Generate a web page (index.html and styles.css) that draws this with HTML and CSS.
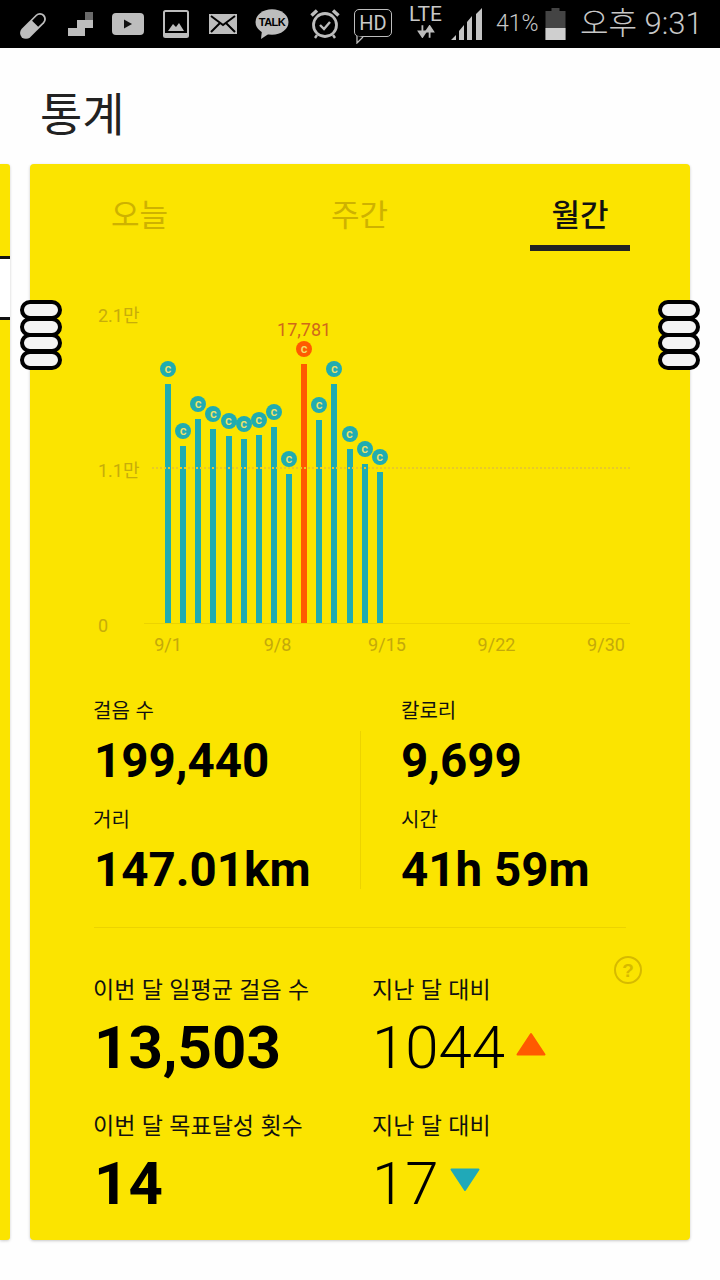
FILE: index.html
```html
<!DOCTYPE html>
<html lang="ko">
<head>
<meta charset="utf-8">
<title>통계</title>
<link rel="stylesheet" href="styles.css">
</head>
<body>
<header class="status">
  <svg class="ic ic-pill" viewBox="0 0 32 32"><path d="M4 21 19 6a6.500 6.500 0 0 1 9 .2 6.500 6.500 0 0 1 0 9L13 30a6.500 6.500 0 0 1-9 0 6.500 6.500 0 0 1 0-9Z" fill="#bdbdbd"/><path d="M20 7.500a4.500 4.500 0 0 1 6.500 0 4.500 4.500 0 0 1 0 6.500L21.500 19 15 12.500Z" fill="#000"/></svg>
  <svg class="ic ic-steps" viewBox="0 0 26 26"><path d="M0 25V17H9V9H25V17H17V25Z" fill="#bdbdbd"/><rect x="17" y="1" width="8" height="8" fill="#6a6a6a"/></svg>
  <svg class="ic ic-yt" viewBox="0 0 32 22"><rect width="32" height="22" rx="4" fill="#bdbdbd"/><path d="M12 6.500v9l8-4.500Z" fill="#111"/></svg>
  <svg class="ic ic-pic" viewBox="0 0 26 28"><rect x="1" y="1" width="24" height="26" rx="1.500" fill="none" stroke="#bdbdbd" stroke-width="2"/><path d="M5 21 10 14l3 3 3-4 5 8Z" fill="#bdbdbd"/><rect x="1" y="23" width="24" height="4" fill="#bdbdbd"/></svg>
  <svg class="ic ic-mail" viewBox="0 0 28 20"><rect width="28" height="20" fill="#bdbdbd"/><path d="M2 2 14 11 26 2M2 18l9-9M26 18l-9-9" stroke="#000" stroke-width="2" fill="none"/></svg>
  <div class="talk"><svg class="ic-talk" viewBox="0 0 34 30"><ellipse cx="17" cy="13" rx="16.500" ry="12.800" fill="#bdbdbd"/><path d="M7 21l-1 9 9-6Z" fill="#bdbdbd"/></svg><span class="talk-text">TALK</span></div>
  <svg class="ic ic-alarm" viewBox="0 0 30 32"><circle cx="15" cy="17" r="11.500" fill="none" stroke="#bdbdbd" stroke-width="2.800"/><path d="M1.500 7.500 7 2.500M28.500 7.500 23 2.500" stroke="#bdbdbd" stroke-width="3.500"/><path d="M10 17l4 4 6-7" stroke="#bdbdbd" stroke-width="2.400" fill="none"/><path d="M7 27l-2 3M23 27l2 3" stroke="#bdbdbd" stroke-width="2.400"/></svg>
  <div class="hd"><span class="hd-text">HD</span><svg class="hd-tail" viewBox="0 0 8 8"><path d="M1 0v7l6-6" fill="#000" stroke="#bdbdbd" stroke-width="1.300"/></svg></div>
  <div class="lte"><span class="lte-text">LTE</span><svg class="lte-arrows" viewBox="0 0 20 14"><path d="M6 0v8M2 7l4 6 4-6Z" stroke="#bdbdbd" stroke-width="2" fill="#bdbdbd"/><path d="M14 14V6M10 7l4-6 4 6Z" stroke="#bdbdbd" stroke-width="2" fill="#bdbdbd"/></svg></div>
  <svg class="ic ic-signal" viewBox="0 0 32 32"><path d="M0 32 5 27V32ZM8 32V23l5-6V32ZM16 32V14l5-6V32ZM25 32V6l6-6V32Z" fill="#c4c4c4"/></svg>
  <span class="pct">41%</span>
  <svg class="ic ic-batt" viewBox="0 0 20 32"><path d="M6 0h8v3h6v29H0V3h6Z" fill="#444"/><rect x="0" y="20" width="20" height="12" fill="#cfcfcf"/></svg>
  <span class="clock">오후 9:31</span>
</header>

<h1 class="title">통계</h1>

<main class="carousel">
  <div class="peek"><div class="peek-box"></div></div>
  <section class="card">
    <nav class="tabs">
      <div class="tab">오늘</div>
      <div class="tab">주간</div>
      <div class="tab active">월간</div>
    </nav>

    <div class="chart">
      <span class="y y-top">2.1만</span>
      <span class="y y-mid">1.1만</span>
      <span class="y y-zero">0</span>
      <div class="midline"></div>
      <div class="plot">
        <div class="bar" style="height:239px"><i class="coin">c</i></div>
        <div class="bar" style="height:177px"><i class="coin">c</i></div>
        <div class="bar" style="height:204px"><i class="coin">c</i></div>
        <div class="bar" style="height:194px"><i class="coin">c</i></div>
        <div class="bar" style="height:187px"><i class="coin">c</i></div>
        <div class="bar" style="height:184px"><i class="coin">c</i></div>
        <div class="bar" style="height:188px"><i class="coin">c</i></div>
        <div class="bar" style="height:196px"><i class="coin">c</i></div>
        <div class="bar" style="height:149px"><i class="coin">c</i></div>
        <div class="bar hot" style="height:259px"><span class="peak">17,781</span><i class="coin">c</i></div>
        <div class="bar" style="height:203px"><i class="coin">c</i></div>
        <div class="bar" style="height:239px"><i class="coin">c</i></div>
        <div class="bar" style="height:174px"><i class="coin">c</i></div>
        <div class="bar" style="height:159px"><i class="coin">c</i></div>
        <div class="bar" style="height:151px"><i class="coin">c</i></div>
      </div>
      <div class="xaxis">
        <span>9/1</span><span>9/8</span><span>9/15</span><span>9/22</span><span>9/30</span>
      </div>
    </div>

    <div class="totals">
      <div class="tcol">
        <div class="stat"><div class="lab">걸음 수</div><div class="val">199,440</div></div>
        <div class="stat"><div class="lab">거리</div><div class="val">147.01km</div></div>
      </div>
      <div class="tcol tcol-r">
        <div class="stat"><div class="lab">칼로리</div><div class="val">9,699</div></div>
        <div class="stat"><div class="lab">시간</div><div class="val">41h 59m</div></div>
      </div>
    </div>

    <div class="compare">
      <svg class="help" viewBox="0 0 30 30"><circle cx="15" cy="15" r="13" fill="none" stroke="#d6ba00" stroke-width="2"/><text x="15" y="21.500" text-anchor="middle" class="help-q">?</text></svg>
      <div class="crow">
        <div class="cleft"><div class="clab">이번 달 일평균 걸음 수</div><div class="cval">13,503</div></div>
        <div class="cright"><div class="clab">지난 달 대비</div><div class="cdelta"><span class="num">1044</span><svg class="tri" viewBox="0 0 30 24"><path d="M15 2 28.500 22.500H1.500Z" fill="#ff5a00" stroke="#ff5a00" stroke-width="2" stroke-linejoin="round"/></svg></div></div>
      </div>
      <div class="crow">
        <div class="cleft"><div class="clab">이번 달 목표달성 횟수</div><div class="cval">14</div></div>
        <div class="cright"><div class="clab">지난 달 대비</div><div class="cdelta"><span class="num">17</span><svg class="tri" viewBox="0 0 30 24"><path d="M15 22 28.500 1.500H1.500Z" fill="#20a9b8" stroke="#20a9b8" stroke-width="2" stroke-linejoin="round"/></svg></div></div>
      </div>
    </div>
  </section>
  <div class="handle handle-l"><b></b><b></b><b></b><b></b></div>
  <div class="handle handle-r"><b></b><b></b><b></b><b></b></div>
</main>
</body>
</html>
```
FILE: styles.css
```css
* { box-sizing: border-box; }
html, body { margin: 0; padding: 0; }
body {
  width: 720px;
  height: 1280px;
  overflow: hidden;
  background: #fefefe;
  color: #000;
  font-family: Roboto, "Noto Sans CJK KR", sans-serif;
}

/* status bar */
.status {
  height: 48px;
  background: #000;
  color: #c8c8c8;
  display: flex;
  align-items: center;
  padding-left: 18px;
}
.ic { display: block; flex: none; }
.ic-pill { width: 30px; height: 30px; margin-right: 20px; }
.ic-steps { width: 26px; height: 26px; margin-right: 18px; }
.ic-yt { width: 32px; height: 22px; margin-right: 19px; }
.ic-pic { width: 26px; height: 28px; margin-right: 20px; }
.ic-mail { width: 28px; height: 20px; margin-right: 18px; }
.talk { position: relative; width: 34px; height: 30px; margin-right: 21px; flex: none; }
.ic-talk { display: block; width: 34px; height: 30px; }
.talk-text {
  position: absolute; left: 0; right: 0; top: 6px;
  text-align: center;
  font: 700 11px/14px "Liberation Sans", sans-serif;
  color: #000;
  letter-spacing: -0.5px;
}
.ic-alarm { width: 30px; height: 32px; margin-right: 14px; }
.hd {
  position: relative;
  flex: none;
  width: 38px; height: 28px;
  margin-right: 15px;
  margin-top: -2px;
  border: 1.500px solid #bdbdbd;
  border-radius: 5px;
  display: flex; align-items: center; justify-content: center;
}
.hd-text { font: 400 20px/24px Roboto, sans-serif; color: #c8c8c8; }
.hd-tail { position: absolute; left: 1px; bottom: -8px; width: 8px; height: 8px; }
.lte { flex: none; width: 37px; margin-right: 7px; margin-top: -6px; display: flex; flex-direction: column; align-items: center; }
.lte-text { font: 400 21px/20px Roboto, sans-serif; color: #c8c8c8; }
.lte-arrows { display: block; width: 18px; height: 13px; margin-top: 1px; }
.ic-signal { width: 32px; height: 32px; margin-right: 13px; }
.pct { width: 44px; margin-right: 5px; font: 300 23px/24px Roboto, sans-serif; flex: none; white-space: nowrap; }
.ic-batt { width: 21px; height: 32px; margin-right: 14px; }
.clock { font: 300 31px/34px Roboto, "Noto Sans CJK KR", sans-serif; flex: none; white-space: nowrap; }

/* title */
.title {
  margin: 0;
  height: 116px;
  padding: 31px 0 0 40px;
  font: 400 46px/64px "Noto Sans CJK KR", sans-serif;
  color: #222;
}

/* carousel */
.carousel {
  position: relative;
  display: flex;
  gap: 20px;
  height: 1076px;
}
.peek {
  width: 10px;
  background: #fbe400;
  border-radius: 0 3px 3px 0;
  padding-top: 92px;
  flex: none;
  box-shadow: 0 1px 3px rgba(0,0,0,.2);
}
.peek-box {
  height: 64px;
  background: #fff;
  border-top: 3px solid #111;
  border-bottom: 3px solid #111;
}
.card {
  position: relative;
  width: 660px;
  flex: none;
  background: #fbe400;
  border-radius: 4px;
  box-shadow: 0 1px 3px rgba(0,0,0,.22);
  overflow: hidden;
}

/* tabs */
.tabs { display: grid; grid-template-columns: repeat(3, 220px); height: 88px; }
.tab {
  position: relative;
  text-align: center;
  padding-top: 24px;
  margin-left: -1px;
  font: 400 31px/50px "Noto Sans CJK KR", sans-serif;
  color: #ceb200;
}
.tab.active { color: #111; font-weight: 500; margin-left: 0; }
.tab.active::after {
  content: "";
  position: absolute;
  left: 60px; width: 100px; top: 81px; height: 6px;
  background: #222;
}

/* chart */
.chart { position: relative; height: 417px; }
.y {
  position: absolute;
  left: 68px;
  font: 400 18px/24px Roboto, "Noto Sans CJK KR", sans-serif;
  color: #c7ad0a;
}
.y-top { top: 52px; }
.y-mid { top: 207px; }
.y-zero { top: 362px; }
.midline {
  position: absolute;
  left: 122px; right: 60px; top: 215px;
  border-top: 2px dotted #e8c92a;
  z-index: 2;
}
.plot {
  position: absolute;
  left: 114px; right: 60px; top: 61px; height: 311px;
  border-bottom: 1px solid #ecd300;
  display: flex;
  align-items: flex-end;
  gap: 9.140px;
  padding-left: 21px;
}
.bar {
  position: relative;
  width: 6px;
  flex: none;
  background: #20acb0;
}
.bar.hot { background: #ff5a00; }
.coin {
  position: absolute;
  left: 50%;
  top: -23px;
  width: 16px; height: 16px;
  margin-left: -8px;
  border-radius: 50%;
  background: #20acb0;
  color: #efe26a;
  font: 500 13px/15px Roboto, sans-serif;
  text-align: center;
}
.bar.hot .coin { background: #ff5a00; }
.peak {
  position: absolute;
  left: 50%;
  top: -44px;
  transform: translateX(-50%);
  font: 400 18px/20px Roboto, sans-serif;
  color: #d0681a;
  white-space: nowrap;
}
.xaxis {
  position: absolute;
  left: 138px; top: 381px;
  width: 438px;
  display: flex;
  justify-content: space-between;
  font: 400 18px/24px Roboto, sans-serif;
  color: #c4a90a;
}
.xaxis span { width: 0; display: flex; justify-content: center; white-space: nowrap; }

/* totals */
.totals {
  position: relative;
  display: flex;
  height: 259px;
  margin: 0 64px;
  padding-top: 27px;
  border-bottom: 1px solid #ecd300;
}
.tcol { width: 267px; }
.tcol:first-child .lab { margin-left: -1px; }
.tcol-r { position: relative; width: 265px; padding-left: 40px; }
.tcol-r::before {
  content: "";
  position: absolute;
  left: -1px; top: 35px; height: 158px; width: 1px;
  background: #ecd300;
}
.stat { height: 109px; }
.lab { font: 400 20px/28px "Noto Sans CJK KR", sans-serif; color: #111; }
.val { font: 700 47.500px/56px Roboto, sans-serif; color: #000; margin-top: 9px; white-space: nowrap; }

/* compare */
.compare { position: relative; padding: 0 0 0 64px; }
.help { position: absolute; left: 583px; top: 27px; width: 30px; height: 30px; }
.help-q { font: 700 19px "Liberation Sans", sans-serif; fill: #d6ba00; }
.crow { display: flex; height: 136px; padding-top: 42px; }
.cleft { width: 278px; flex: none; }
.cleft .clab { margin-left: -1px; }
.clab { font: 400 23px/36px "Noto Sans CJK KR", sans-serif; color: #111; white-space: nowrap; }
.cval { font: 700 60px/64px Roboto, sans-serif; margin-top: 10px; color: #000; }
.cdelta { display: flex; align-items: center; margin-top: 10px; height: 64px; }
.num { font: 300 60px/64px Roboto, sans-serif; color: #000; }
.tri { display: block; width: 30px; height: 24px; margin-left: 11px; margin-top: -8px; }

/* handles */
.handle {
  position: absolute;
  top: 136px;
  width: 42px;
  display: flex;
  flex-direction: column;
}
.handle-l { left: 20px; }
.handle-r { left: 658px; }
.handle b {
  display: block;
  height: 20px;
  margin-bottom: -3.330px;
  background: #f4f4f4;
  border: 4px solid #000;
  border-radius: 10px;
}
.handle b:last-child { margin-bottom: 0; }
```
